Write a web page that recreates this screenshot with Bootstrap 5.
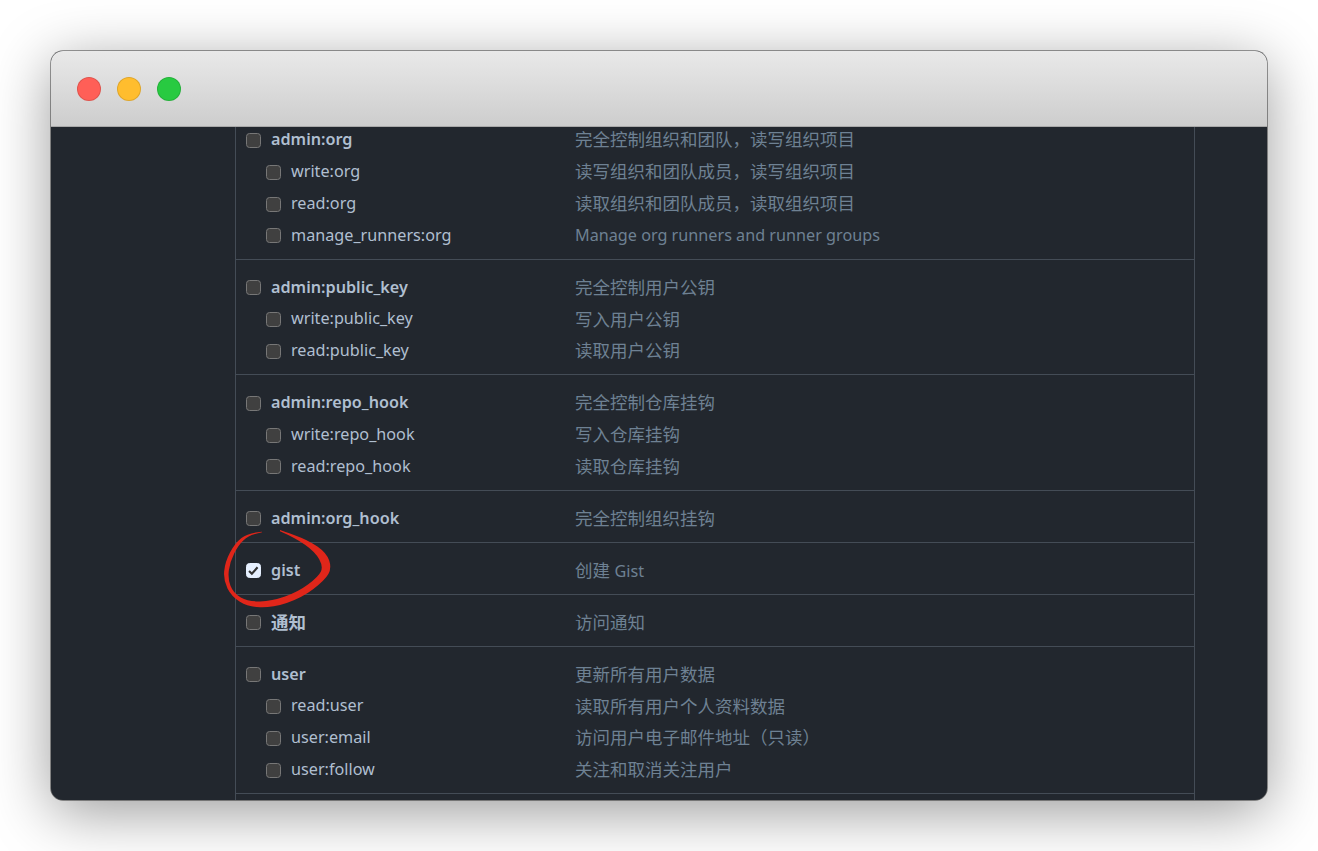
<!doctype html>
<html lang="zh-CN">
<head>
<meta charset="utf-8">
<title>Scopes</title>
<link rel="stylesheet" href="https://cdn.jsdelivr.net/npm/bootstrap@5.3.0/dist/css/bootstrap.min.css">
<style>
html,body{height:100%;background:#fff;overflow:hidden}
body{padding:51px 51px 0;font-family:"Noto Sans","Noto Sans CJK SC",sans-serif;font-size:17.5px}
.mac-win{position:relative;height:749px;background:#22272e;border-radius:12px;box-shadow:0 12px 60px rgba(0,0,0,.4),0 0 0 .75px rgba(0,0,0,.5);overflow:hidden}
.mac-bar{height:76px;padding-left:26px;gap:16px;background:linear-gradient(#e9e9e9,#cdcdcd);border-bottom:1px solid #a9a9a9}
.dot{width:24px;height:24px;border-radius:50%;border:1px solid rgba(0,0,0,.12)}
.dot-r{background:#ff5f57}.dot-y{background:#ffbd2e}.dot-g{background:#28ca41}
.scope-panel{width:960px;margin-left:184px;height:673px;border-left:1px solid #444c56;border-right:1px solid #444c56;overflow:hidden}
.scope-group{padding:12px 0 7px 10px;border-bottom:1px solid #444c56}
.scope-group.first{padding-top:0}
.scope-row{height:31.75px}
.scope-row.head{height:32px;font-weight:600;color:#b0bfd0}
.first .scope-row.head{height:29.5px;padding-bottom:3px}
.scope-row.sub{padding-left:20px;color:#b0bfd0}
.scope-row .form-check-input{width:15px;height:15px;margin:0 10px 0 0;flex:none;background-color:#404040;border:1.5px solid #777;border-radius:3.5px}
.scope-row .form-check-input:checked{background-color:#e6f0ff;border-color:#e6f0ff;background-size:100%;background-image:url("data:image/svg+xml,%3Csvg xmlns='http://www.w3.org/2000/svg' viewBox='0 0 16 16'%3E%3Cpath fill='none' stroke='%23333' stroke-width='2.6' d='M2.500 8.500l3.500 3.500 7-8'/%3E%3C/svg%3E")}
.scope-name,.scope-desc{margin-bottom:2px}
.scope-name{width:304px;flex:none}
.sub .scope-name{width:284px}
.scope-desc{color:#6e8193;font-weight:400}
.lat{font-size:16.2px}
.ink{position:absolute;left:-51px;top:-51px;width:1318px;height:851px;pointer-events:none}
</style>
</head>
<body>
<div class="mac-win">
  <div class="mac-bar d-flex align-items-center">
    <div class="dot dot-r"></div><div class="dot dot-y"></div><div class="dot dot-g"></div>
  </div>
  <div class="scope-panel">
    <div class="scope-group first">
      <div class="scope-row head d-flex align-items-center"><input class="form-check-input" type="checkbox"><span class="scope-name lat">admin:org</span><span class="scope-desc">完全控制组织和团队，读写组织项目</span></div>
      <div class="scope-row sub d-flex align-items-center"><input class="form-check-input" type="checkbox"><span class="scope-name lat">write:org</span><span class="scope-desc">读写组织和团队成员，读写组织项目</span></div>
      <div class="scope-row sub d-flex align-items-center"><input class="form-check-input" type="checkbox"><span class="scope-name lat">read:org</span><span class="scope-desc">读取组织和团队成员，读取组织项目</span></div>
      <div class="scope-row sub d-flex align-items-center"><input class="form-check-input" type="checkbox"><span class="scope-name lat">manage_runners:org</span><span class="scope-desc lat">Manage org runners and runner groups</span></div>
    </div>
    <div class="scope-group">
      <div class="scope-row head d-flex align-items-center"><input class="form-check-input" type="checkbox"><span class="scope-name lat">admin:public_key</span><span class="scope-desc">完全控制用户公钥</span></div>
      <div class="scope-row sub d-flex align-items-center"><input class="form-check-input" type="checkbox"><span class="scope-name lat">write:public_key</span><span class="scope-desc">写入用户公钥</span></div>
      <div class="scope-row sub d-flex align-items-center"><input class="form-check-input" type="checkbox"><span class="scope-name lat">read:public_key</span><span class="scope-desc">读取用户公钥</span></div>
    </div>
    <div class="scope-group">
      <div class="scope-row head d-flex align-items-center"><input class="form-check-input" type="checkbox"><span class="scope-name lat">admin:repo_hook</span><span class="scope-desc">完全控制仓库挂钩</span></div>
      <div class="scope-row sub d-flex align-items-center"><input class="form-check-input" type="checkbox"><span class="scope-name lat">write:repo_hook</span><span class="scope-desc">写入仓库挂钩</span></div>
      <div class="scope-row sub d-flex align-items-center"><input class="form-check-input" type="checkbox"><span class="scope-name lat">read:repo_hook</span><span class="scope-desc">读取仓库挂钩</span></div>
    </div>
    <div class="scope-group">
      <div class="scope-row head d-flex align-items-center"><input class="form-check-input" type="checkbox"><span class="scope-name lat">admin:org_hook</span><span class="scope-desc">完全控制组织挂钩</span></div>
    </div>
    <div class="scope-group">
      <div class="scope-row head d-flex align-items-center"><input class="form-check-input" type="checkbox" checked><span class="scope-name lat">gist</span><span class="scope-desc">创建 <span class="lat">Gist</span></span></div>
    </div>
    <div class="scope-group">
      <div class="scope-row head d-flex align-items-center"><input class="form-check-input" type="checkbox"><span class="scope-name">通知</span><span class="scope-desc">访问通知</span></div>
    </div>
    <div class="scope-group">
      <div class="scope-row head d-flex align-items-center"><input class="form-check-input" type="checkbox"><span class="scope-name lat">user</span><span class="scope-desc">更新所有用户数据</span></div>
      <div class="scope-row sub d-flex align-items-center"><input class="form-check-input" type="checkbox"><span class="scope-name lat">read:user</span><span class="scope-desc">读取所有用户个人资料数据</span></div>
      <div class="scope-row sub d-flex align-items-center"><input class="form-check-input" type="checkbox"><span class="scope-name lat">user:email</span><span class="scope-desc">访问用户电子邮件地址（只读）</span></div>
      <div class="scope-row sub d-flex align-items-center"><input class="form-check-input" type="checkbox"><span class="scope-name lat">user:follow</span><span class="scope-desc">关注和取消关注用户</span></div>
    </div>
  </div>
  <svg class="ink" viewBox="0 0 1318 851" aria-hidden="true">
    <path fill="#e0261a" d="M262 531.700Q248 533 241.500 538Q235 543 230 552.500Q225 562 224.200 571Q223.300 580 227.500 588.400Q231.700 596.700 239.900 601.700Q248 606.700 259.900 607.200Q271.700 607.700 286.700 602.900Q301.700 598 313.400 589Q325 580 328.400 574Q331.700 568 329.200 560.500Q326.700 553 317.400 546.500Q308 540 294 535Q280 530 280 530L280 531.200Q295 537.700 305 544.700Q315 551.700 319.200 559.200Q323.300 566.700 320.800 571.700Q318.300 576.700 308.300 584.200Q298.300 591.700 285 596.400Q271.700 601 260 601.400Q248.300 601.700 240.800 597.500Q233.300 593.300 230.500 585.800Q227.700 578.300 228.900 570Q230 561.700 234.200 553.400Q238.300 545 243.300 540.400Q248.300 535.700 255 534Q261.700 532.300 262 532.300Z"/>
  </svg>
</div>
</body>
</html>
